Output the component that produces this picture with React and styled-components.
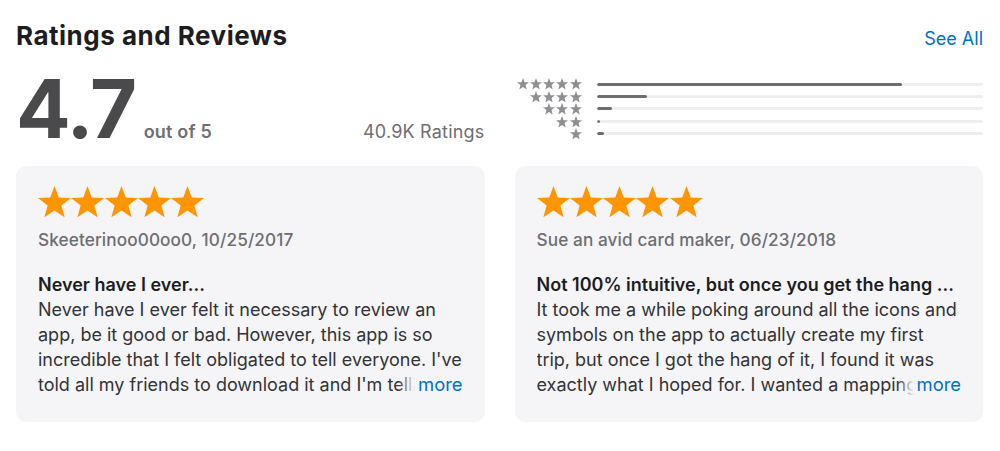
import React from 'react'
import styled, { createGlobalStyle } from 'styled-components'

const GlobalStyle = createGlobalStyle`
  body {
    margin: 0;
    background: #fff;
    font-family: Inter, "Noto Sans", sans-serif;
    -webkit-font-smoothing: antialiased;
  }
`

const Section = styled.section`
  padding: 19px 17px 0 16px;
`

const Header = styled.div`
  display: flex;
  justify-content: space-between;
  align-items: baseline;
`

const Title = styled.h2`
  margin: 0;
  font-size: 26px;
  line-height: 34px;
  font-weight: 700;
  color: #1d1d1f;
  letter-spacing: 0.5px;
`

const SeeAll = styled.a`
  font-size: 18px;
  color: #0070c9;
  text-decoration: none;
`

const Summary = styled.div`
  display: grid;
  grid-template-columns: 1fr 1fr;
  column-gap: 30px;
  margin-top: 16px;
  height: 97px;
`

const Score = styled.div`
  display: flex;
  align-items: baseline;
  justify-content: space-between;
  height: 80px;
`

const ScoreLeft = styled.div`
  display: flex;
  align-items: baseline;
`

const BigNumber = styled.span`
  font-size: 81px;
  line-height: 80px;
  font-weight: 700;
  color: #4a4a4d;
  letter-spacing: -1.5px;
`

const OutOf = styled.span`
  margin-left: 8px;
  font-size: 18px;
  font-weight: 600;
  color: #6e6e73;
  letter-spacing: 0.2px;
`

const Count = styled.span`
  font-size: 18px;
  color: #6e6e73;
  letter-spacing: 0.2px;
`

const Histogram = styled.div`
  display: grid;
  grid-auto-rows: 12.4px;
  padding-top: 9px;
`

const HistRow = styled.div`
  display: flex;
  align-items: center;
`

const HistStars = styled.div`
  width: 67px;
  display: flex;
  justify-content: flex-end;
  gap: 1.2px;
`

const Track = styled.div`
  flex: 1;
  margin-left: 15px;
  height: 3px;
  border-radius: 2px;
  background: #efeff1;
  overflow: hidden;
`

const Fill = styled.div`
  height: 100%;
  background: #6e6e70;
  border-radius: 2px;
`

const Cards = styled.div`
  display: grid;
  grid-template-columns: 1fr 1fr;
  column-gap: 30px;
`

const Card = styled.article`
  background: #f5f5f7;
  border-radius: 10px;
  padding: 20px 21px 24px 22px;
  height: 256px;
  box-sizing: border-box;
`

const CardStars = styled.div`
  display: flex;
  gap: 0.3px;
  height: 31.4px;
`

const Author = styled.div`
  margin-top: 12px;
  font-size: 17.2px;
  line-height: 22px;
  font-weight: 500;
  color: #6e6e73;
  letter-spacing: 0.1px;
`

const ReviewTitle = styled.h3`
  margin: 21px 0 0;
  font-size: 18px;
  line-height: 25px;
  font-weight: 600;
  color: #1d1d1f;
  white-space: nowrap;
  overflow: hidden;
  text-overflow: ellipsis;
`

const BodyWrap = styled.div`
  position: relative;
`

const Body = styled.p`
  margin: 0;
  font-size: 18px;
  line-height: 25px;
  color: #333336;
  max-height: 100px;
  overflow: hidden;
`

const More = styled.a`
  position: absolute;
  right: 1px;
  bottom: 0;
  font-size: 18.4px;
  line-height: 25px;
  color: #0070c9;
  text-decoration: none;
  padding-left: 20px;
  background: linear-gradient(to right, rgba(245, 245, 247, 0), #f5f5f7 17px);
`

const starPath =
  'M12 1.3 L14.82 8.92 L22.94 9.25 L16.56 14.28 L18.76 22.1 L12 17.6 L5.24 22.1 L7.44 14.28 L1.06 9.25 L9.18 8.92 Z'

// viewBox cropped tight to the star so the boxes sit edge to edge
const Star = ({ width, color }) => (
  <svg width={width} height={(width * 20.8) / 21.88} viewBox="1.06 1.3 21.88 20.8">
    <path d={starPath} fill={color} />
  </svg>
)

const histogram = [
  { stars: 5, pct: 79 },
  { stars: 4, pct: 13 },
  { stars: 3, pct: 4 },
  { stars: 2, pct: 1 },
  { stars: 1, pct: 2 },
]

const reviews = [
  {
    author: 'Skeeterinoo00oo0, 10/25/2017',
    title: 'Never have I ever...',
    body:
      "Never have I ever felt it necessary to review an app, be it good or bad. However, this app is so incredible that I felt obligated to tell everyone. I've told all my friends to download it and I'm telling everyone I know to do the same.",
  },
  {
    author: 'Sue an avid card maker, 06/23/2018',
    title: 'Not 100% intuitive, but once you get the hang ...',
    body:
      'It took me a while poking around all the icons and symbols on the app to actually create my first trip, but once I got the hang of it, I found it was exactly what I hoped for. I wanted a mapping app that let me plan every stop.',
  },
]

export default function App() {
  return (
    <>
      <GlobalStyle />
      <Section>
        <Header>
          <Title>Ratings and Reviews</Title>
          <SeeAll href="#">See All</SeeAll>
        </Header>
        <Summary>
          <Score>
            <ScoreLeft>
              <BigNumber>4.7</BigNumber>
              <OutOf>out of 5</OutOf>
            </ScoreLeft>
            <Count>40.9K Ratings</Count>
          </Score>
          <Histogram>
            {histogram.map((row) => (
              <HistRow key={row.stars}>
                <HistStars>
                  {Array.from({ length: row.stars }).map((_, i) => (
                    <Star key={i} width={12} color="#8e8e93" />
                  ))}
                </HistStars>
                <Track>
                  <Fill style={{ width: `${row.pct}%` }} />
                </Track>
              </HistRow>
            ))}
          </Histogram>
        </Summary>
        <Cards>
          {reviews.map((r) => (
            <Card key={r.author}>
              <CardStars>
                {Array.from({ length: 5 }).map((_, i) => (
                  <Star key={i} width={33} color="#ff9500" />
                ))}
              </CardStars>
              <Author>{r.author}</Author>
              <ReviewTitle>{r.title}</ReviewTitle>
              <BodyWrap>
                <Body>{r.body}</Body>
                <More href="#">more</More>
              </BodyWrap>
            </Card>
          ))}
        </Cards>
      </Section>
    </>
  )
}
